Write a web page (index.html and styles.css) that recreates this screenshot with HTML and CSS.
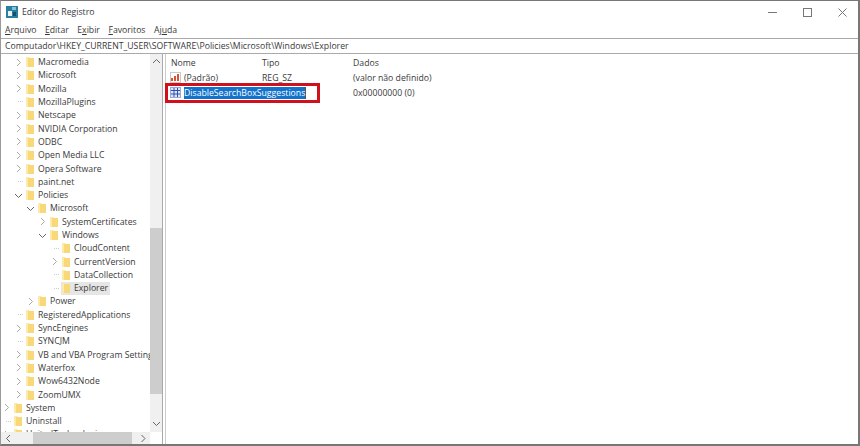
FILE: index.html
```html
<!DOCTYPE html>
<html lang="pt">
<head>
    <meta charset="UTF-8">
    <title>Editor do Registro</title>
    <link rel="stylesheet" href="styles.css">
</head>
<body>
    <svg width="0" height="0" class="defs">
        <symbol id="folder" viewBox="0 0 8 12">
            <path d="M0 1h3l1 1h4v9H0z" fill="#fdeaa8"/>
            <path d="M2 2h6v9H2z" fill="#f8d878"/>
        </symbol>
    </svg>
    <div class="window">
        <div class="titlebar">
            <svg class="app-icon" width="12" height="12" viewBox="0 0 12 12">
                <rect x="0" y="0" width="12" height="12" fill="#2a7f9e"/>
                <rect x="2" y="5" width="4" height="5" fill="#e8f2f6"/>
                <rect x="6" y="1" width="4" height="3" fill="#7fc4dc"/>
                <rect x="7" y="6" width="3" height="4" fill="#15506a"/>
            </svg>
            <span class="title">Editor do Registro</span>
            <div class="controls">
                <svg class="ctl" width="9" height="9" viewBox="0 0 9 9"><path d="M0 4.5h9" stroke="#777" fill="none"/></svg>
                <svg class="ctl" width="9" height="9" viewBox="0 0 9 9"><rect x=".5" y=".5" width="8" height="8" stroke="#777" fill="none"/></svg>
                <svg class="ctl" width="9" height="9" viewBox="0 0 9 9"><path d="M.5.5l8 8M8.5.5l-8 8" stroke="#777" fill="none"/></svg>
            </div>
        </div>
        <div class="menu">
            <span><u>A</u>rquivo</span>
            <span><u>E</u>ditar</span>
            <span>E<u>x</u>ibir</span>
            <span><u>F</u>avoritos</span>
            <span>Aj<u>u</u>da</span>
        </div>
        <div class="address">Computador\HKEY_CURRENT_USER\SOFTWARE\Policies\Microsoft\Windows\Explorer</div>
        <div class="panes">
            <div class="tree-pane">
                <div class="tree-body">
                    <div class="tree" id="tree"></div>
                    <div class="vscroll">
                        <svg class="arrow" width="9" height="12" viewBox="0 0 9 12"><path d="M1 8l3.5-3.5L8 8" stroke="#666" fill="none"/></svg>
                        <div class="vtrack"><div class="vthumb"></div></div>
                        <svg class="arrow" width="9" height="12" viewBox="0 0 9 12"><path d="M1 4l3.5 3.5L8 4" stroke="#666" fill="none"/></svg>
                    </div>
                </div>
                <div class="hscroll">
                    <svg class="harrow" width="14" height="9" viewBox="0 0 14 9"><path d="M9 1L5.5 4.5 9 8" stroke="#666" fill="none"/></svg>
                    <div class="htrack"><div class="hthumb"></div></div>
                    <svg class="harrow" width="14" height="9" viewBox="0 0 14 9"><path d="M5.5 1L9 4.5 5.5 8" stroke="#666" fill="none"/></svg>
                </div>
            </div>
            <div class="list-pane">
                <div class="list-row list-head">
                    <span class="col-name">Nome</span>
                    <span class="col-type">Tipo</span>
                    <span>Dados</span>
                </div>
                <div class="list-row">
                    <span class="col-name">
                        <svg class="val-icon" width="11" height="11" viewBox="0 0 11 11">
                            <rect x=".5" y=".5" width="10" height="10" fill="#fff" stroke="#c8c8c8"/>
                            <path d="M1 9V6h2v3zM4 9V4h2v5zM7 9V2h2v7z" fill="#d9532f"/>
                        </svg>
                        (Padrão)
                    </span>
                    <span class="col-type">REG_SZ</span>
                    <span>(valor não definido)</span>
                </div>
                <div class="list-row">
                    <span class="col-name">
                        <svg class="val-icon" width="11" height="11" viewBox="0 0 11 11">
                            <rect x=".5" y=".5" width="10" height="10" fill="#dfe6f7" stroke="#9aa8d8"/>
                            <path d="M1 3.5h9M1 7h9M4 1v9M7.5 1v9" stroke="#2f4fb0" fill="none"/>
                        </svg>
                        <span class="rename"><span class="selected">DisableSearchBoxSuggestions</span></span>
                    </span>
                    <span class="col-type"></span>
                    <span>0x00000000 (0)</span>
                </div>
                <div class="highlight"></div>
            </div>
        </div>
    </div>
    <script src="tree.js"></script>
</body>
</html>
```

FILE: styles.css
```css
* {
    margin: 0;
    padding: 0;
    box-sizing: border-box;
}

body {
    width: 860px;
    height: 446px;
    overflow: hidden;
    background: #fff;
    font-family: "Open Sans", "Noto Sans", sans-serif;
    font-size: 8.7px;
    color: #3a3a3a;
}

.defs {
    display: block;
    height: 0;
}

.window {
    width: 860px;
    height: 446px;
    display: flex;
    flex-direction: column;
    border-top: 1px solid #777;
    border-left: 1px solid #999;
    border-right: 2px solid #777;
    border-bottom: 2px solid #777;
}

.titlebar {
    height: 22px;
    display: flex;
    align-items: center;
    padding-left: 5px;
}

.title {
    margin-left: 4px;
}

.controls {
    margin-left: auto;
    display: flex;
    gap: 26px;
    padding-right: 11px;
}

.menu {
    height: 15px;
    display: flex;
    gap: 8.5px;
    align-items: center;
    padding: 0 0 1px 4px;
}

.address {
    height: 16px;
    line-height: 14px;
    padding-left: 4px;
    border-top: 1px solid #aaa;
    border-bottom: 1px solid #aaa;
    white-space: nowrap;
}

.panes {
    flex: 1;
    min-height: 0;
    display: flex;
}

.tree-pane {
    width: 162px;
    display: flex;
    flex-direction: column;
    border-right: 1px solid #aaa;
}

.tree-body {
    flex: 1;
    min-height: 0;
    display: flex;
}

.tree {
    flex: 1;
    min-width: 0;
    overflow: hidden;
    padding-top: 1.5px;
    border-left: 1px solid #fff;
}

.tree-row {
    height: 13.3px;
    display: flex;
    align-items: center;
    white-space: nowrap;
}

.twisty {
    width: 9px;
    height: 100%;
    flex: none;
    display: flex;
    align-items: center;
}

.twisty.leaf {
    position: relative;
}

.twisty.leaf::after {
    content: "";
    position: absolute;
    left: 4px;
    top: 6px;
    width: 5px;
    border-top: 1px dotted #ccc;
}

.node {
    display: flex;
    align-items: center;
    height: 100%;
    margin-left: 2px;
    padding-right: 2px;
}

.node svg {
    flex: none;
    margin-left: 1px;
    margin-right: 4px;
}

.tree-row.current .node {
    background: #e6e6e6;
}

.vscroll {
    width: 12px;
    flex: none;
    display: flex;
    flex-direction: column;
    align-items: center;
    padding: 1px 0 2px;
    background: #f0f0f0;
}

.arrow {
    flex: none;
}

.vtrack {
    flex: 1;
    width: 100%;
    padding-top: 161px;
    padding-bottom: 24px;
}

.vthumb {
    height: 100%;
    background: #cdcdcd;
}

.hscroll {
    height: 12px;
    margin-right: 12px;
    display: flex;
    align-items: center;
    background: #f0f0f0;
}

.harrow {
    flex: none;
}

.htrack {
    flex: 1;
    height: 100%;
    padding: 0 4px 0 18px;
}

.hthumb {
    height: 100%;
    background: #cdcdcd;
}

.list-pane {
    position: relative;
    flex: 1;
    min-width: 0;
    margin-left: 2px;
    border-left: 1px solid #ccc;
    padding: 1px 0 0 4px;
}

.list-row {
    height: 15px;
    display: flex;
    align-items: center;
    white-space: nowrap;
}

.col-name {
    width: 92px;
    display: flex;
    align-items: center;
    gap: 3px;
}

.list-head .col-name {
    padding-left: 1px;
}

.col-type {
    width: 91px;
}

.val-icon {
    flex: none;
}

.rename {
    display: block;
    width: 132px;
    height: 12px;
    line-height: 12px;
    border-right: 1px solid #555;
}

.selected {
    display: inline-block;
    height: 12px;
    background: #1272cc;
    color: #fff;
}

.highlight {
    position: absolute;
    left: -1px;
    top: 29px;
    width: 155px;
    height: 20px;
    border: 3px solid #d0101a;
}
```

FILE: tree.js
```js
// [name, depth, twisty, current]  twisty: ">" closed, "v" open, "" leaf
const rows = [
    ['Macromedia', 2, '>'], ['Microsoft', 2, '>'], ['Mozilla', 2, '>'],
    ['MozillaPlugins', 2, ''], ['Netscape', 2, '>'], ['NVIDIA Corporation', 2, '>'],
    ['ODBC', 2, '>'], ['Open Media LLC', 2, '>'], ['Opera Software', 2, '>'],
    ['paint.net', 2, ''], ['Policies', 2, 'v'], ['Microsoft', 3, 'v'],
    ['SystemCertificates', 4, '>'], ['Windows', 4, 'v'], ['CloudContent', 5, ''],
    ['CurrentVersion', 5, '>'], ['DataCollection', 5, ''], ['Explorer', 5, '', true],
    ['Power', 3, '>'], ['RegisteredApplications', 2, ''], ['SyncEngines', 2, '>'],
    ['SYNCJM', 2, ''], ['VB and VBA Program Settings', 2, '>'], ['Waterfox', 2, '>'],
    ['Wow6432Node', 2, '>'], ['ZoomUMX', 2, '>'], ['System', 1, '>'],
    ['Uninstall', 1, ''], ['UnitedTechnologies', 1, '>']
];

const chevrons = {
    '>': '<svg width="9" height="9" viewBox="0 0 9 9"><path d="M3 1l3.5 3.5L3 8" stroke="#aaa" fill="none"/></svg>',
    'v': '<svg width="9" height="9" viewBox="0 0 9 9"><path d="M1 3l3.5 3.5L8 3" stroke="#666" fill="none"/></svg>'
};

const tree = document.getElementById('tree');
tree.innerHTML = rows.map(([name, depth, twisty, current]) => {
    const mark = chevrons[twisty] || '';
    return `<div class="tree-row${current ? ' current' : ''}" style="padding-left:${(depth - 1) * 12}px">
        <span class="twisty${twisty ? '' : ' leaf'}">${mark}</span>
        <span class="node"><svg width="8" height="12"><use href="#folder"/></svg><span class="name">${name}</span></span>
    </div>`;
}).join('');
```
